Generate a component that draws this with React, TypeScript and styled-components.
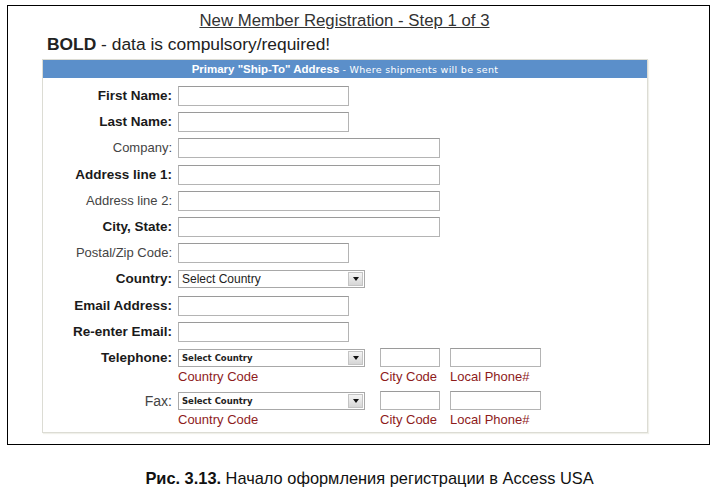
import React from 'react';
import styled, { createGlobalStyle } from 'styled-components';

const RED = '#8e1b1b';
const BLUE = '#5b8fca';

const GlobalStyle = createGlobalStyle`
    body {
        margin: 0;
        background: #fff;
        font-family: "Liberation Sans", Arial, sans-serif;
        color: #222;
    }
`;

const Page = styled.div`
    width: 717px;
    height: 493px;
    padding: 5px 7px 0;
    box-sizing: border-box;
`;

const Frame = styled.div`
    height: 440px;
    border: 1.5px solid #000;
    box-sizing: border-box;
    padding: 5px 0 0 34px;
`;

const Title = styled.h1`
    margin: 0 0 0 -62px;
    text-align: center;
    font-size: 16.8px;
    font-weight: normal;
    text-decoration: underline;
    color: #333;
    line-height: 20px;
`;

const Note = styled.p`
    margin: 3px 0 0 5px;
    font-size: 17.4px;
    line-height: 20px;
    color: #222;
    b { font-weight: bold; }
`;

const Panel = styled.div`
    width: 606px;
    height: 374px;
    margin-top: 5px;
    border: 1px solid #dcdcd4;
    box-sizing: border-box;
    box-shadow: 1px 1px 1px #f0f0ea;
`;

const PanelHeader = styled.div`
    height: 18px;
    background: ${BLUE};
    color: #fff;
    text-align: center;
    line-height: 18px;
    font-size: 11.5px;
    font-weight: bold;
    small {
        font-weight: normal;
        font-size: 9.5px;
        letter-spacing: 0.3px;
        font-family: "DejaVu Sans", Verdana, sans-serif;
    }
`;

const Form = styled.div`
    display: grid;
    grid-template-columns: 129px 1fr;
    column-gap: 6px;
    row-gap: 6.2px;
    padding-top: 8px;
    align-items: start;
`;

const Label = styled.label<{ $bold?: boolean; $big?: boolean }>`
    text-align: right;
    font-size: ${p => (p.$big ? 14 : p.$bold ? 13.5 : 13)}px;
    font-weight: ${p => (p.$bold ? 'bold' : 'normal')};
    color: ${p => (p.$bold ? '#1a1a1a' : '#444')};
    line-height: 20px;
`;

const Input = styled.div<{ $w: number; $h?: number }>`
    width: ${p => p.$w}px;
    height: ${p => p.$h ?? 20}px;
    box-sizing: border-box;
    border: 1px solid #b4b4b4;
    border-top-color: #9a9a9a;
    background: #fff;
`;

const Select = styled.div<{ $small?: boolean }>`
    width: 187px;
    height: 18px;
    box-sizing: border-box;
    border: 1px solid #a8a8a8;
    display: flex;
    align-items: center;
    justify-content: space-between;
    padding-left: 3px;
    font-size: ${p => (p.$small ? 8.5 : 12)}px;
    font-weight: ${p => (p.$small ? 'bold' : 'normal')};
    font-family: ${p => (p.$small ? '"DejaVu Sans", sans-serif' : '"Liberation Sans", Arial, sans-serif')};
    color: #222;
    margin-top: 1px;
`;

const Arrow = styled.span`
    width: 15px;
    height: 14px;
    margin-right: 1px;
    background: linear-gradient(#f4f4f4, #d6d6d6);
    border: 1px solid #c4c4c4;
    box-sizing: border-box;
    display: flex;
    align-items: center;
    justify-content: center;
    &::after {
        content: '';
        border-left: 3px solid transparent;
        border-right: 3px solid transparent;
        border-top: 4px solid #111;
    }
`;

const PhoneRow = styled.div`
    display: flex;
`;

const PhoneCol = styled.div<{ $mr: number }>`
    display: flex;
    flex-direction: column;
    margin-right: ${p => p.$mr}px;
`;

const Hint = styled.span`
    color: ${RED};
    font-size: 13px;
    line-height: 16px;
    margin-top: 2px;
`;

const Caption = styled.p`
    margin: 24px 0 0;
    padding-left: 22px;
    text-align: center;
    font-size: 16.4px;
    color: #111;
    b { font-weight: bold; }
`;

const rows: { label: string; bold?: boolean; w: number }[] = [
    { label: 'First Name:', bold: true, w: 171 },
    { label: 'Last Name:', bold: true, w: 171 },
    { label: 'Company:', w: 262 },
    { label: 'Address line 1:', bold: true, w: 262 },
    { label: 'Address line 2:', w: 262 },
    { label: 'City, State:', bold: true, w: 262 },
    { label: 'Postal/Zip Code:', w: 171 },
];

const Phone = ({ label, bold }: { label: string; bold?: boolean }) => (
    <>
        <Label $bold={bold} $big={!bold}>{label}</Label>
        <PhoneRow>
            <PhoneCol $mr={15}>
                <Select $small>Select Country<Arrow /></Select>
                <Hint>Country Code</Hint>
            </PhoneCol>
            <PhoneCol $mr={10}>
                <Input $w={60} $h={19} />
                <Hint>City Code</Hint>
            </PhoneCol>
            <PhoneCol $mr={0}>
                <Input $w={91} $h={19} />
                <Hint>Local Phone#</Hint>
            </PhoneCol>
        </PhoneRow>
    </>
);

const App = () => (
    <Page>
        <GlobalStyle />
        <Frame>
            <Title>New Member Registration - Step 1 of 3</Title>
            <Note><b>BOLD</b> - data is compulsory/required!</Note>
            <Panel>
                <PanelHeader>
                    Primary "Ship-To" Address <small>- Where shipments will be sent</small>
                </PanelHeader>
                <Form>
                    {rows.map(r => (
                        <React.Fragment key={r.label}>
                            <Label $bold={r.bold}>{r.label}</Label>
                            <Input $w={r.w} />
                        </React.Fragment>
                    ))}
                    <Label $bold>Country:</Label>
                    <Select>Select Country<Arrow /></Select>
                    <Label $bold>Email Address:</Label>
                    <Input $w={171} />
                    <Label $bold>Re-enter Email:</Label>
                    <Input $w={171} />
                    <Phone label="Telephone:" bold />
                    <Phone label="Fax:" />
                </Form>
            </Panel>
        </Frame>
        <Caption><b>Рис. 3.13.</b> Начало оформления регистрации в Access USA</Caption>
    </Page>
);

export default App;
